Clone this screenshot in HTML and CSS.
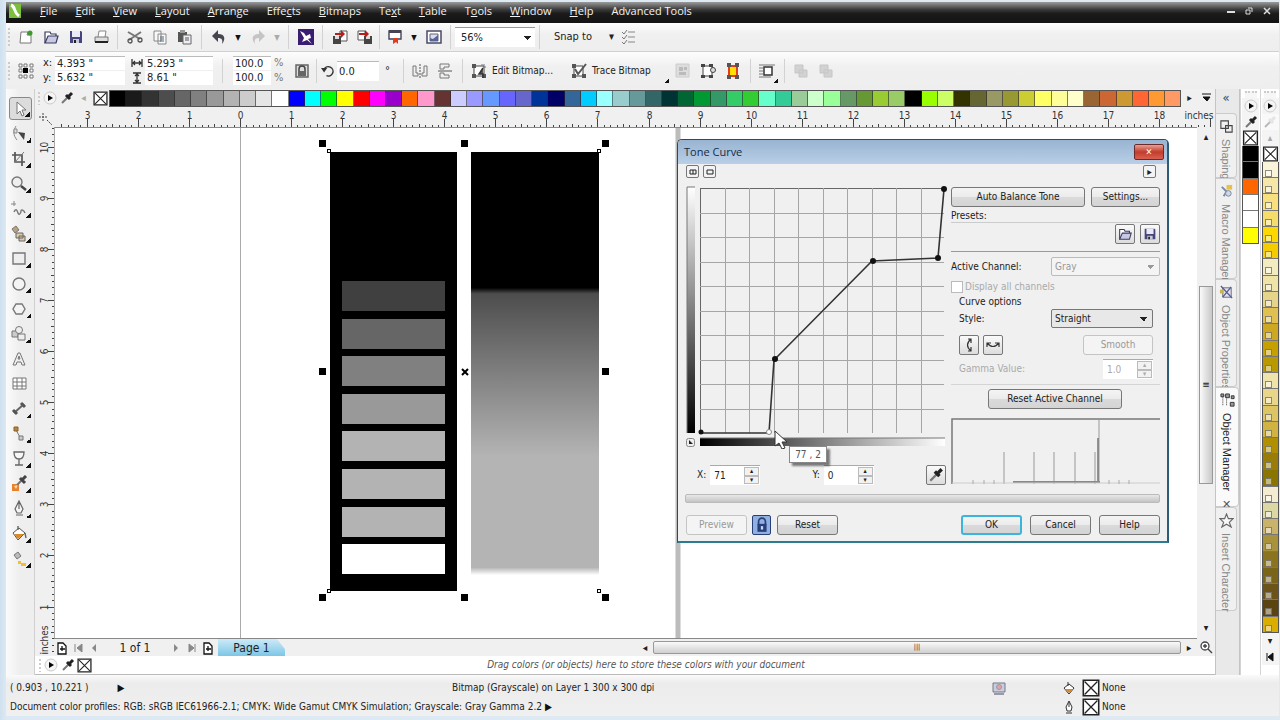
FILE: index.html
```html
<!DOCTYPE html>
<html lang="en">
<head>
<meta charset="utf-8">
<title>Tone Curve</title>
<link rel="stylesheet" href="styles.css">
</head>
<body>
<svg class="defs" aria-hidden="true">
  <defs>
    <linearGradient id="ramp-v" x1="0" y1="0" x2="0" y2="1"><stop offset="0" stop-color="#fff"/><stop offset="1" stop-color="#000"/></linearGradient>
    <linearGradient id="ramp-h" x1="0" y1="0" x2="1" y2="0"><stop offset="0" stop-color="#000"/><stop offset="1" stop-color="#fff"/></linearGradient>
    <linearGradient id="blend" x1="0" y1="0" x2="0" y2="1"><stop offset="0" stop-color="#000"/><stop offset=".321" stop-color="#000"/><stop offset=".335" stop-color="#4d4d4d"/><stop offset=".72" stop-color="#b4b4b4"/><stop offset=".982" stop-color="#b4b4b4"/><stop offset="1" stop-color="#fff"/></linearGradient>
  </defs>
  <symbol id="i-new" viewBox="0 0 18 18"><path d="M4 4h7l-1 3h4v8H3z" fill="#fff" stroke="#777"/><circle cx="13" cy="5" r="2.500" fill="#3d9a2e"/></symbol>
  <symbol id="i-open" viewBox="0 0 18 18"><path d="M3 15V4h5l1 2h5v2" fill="#fff" stroke="#3b3a60" stroke-width="1.2"/><path d="M3 15l3-7h10l-2 7z" fill="#c9c9e2" stroke="#3b3a60" stroke-width="1.2"/></symbol>
  <symbol id="i-save" viewBox="0 0 18 18"><path d="M3 3h11l1 1v11H3z" fill="#45447c"/><path d="M5 3h8v6H5z" fill="#e8e8f6"/><path d="M6 11h6v4H6z" fill="#c9c9d8"/><path d="M7 12h2v3H7z" fill="#222"/></symbol>
  <symbol id="i-print" viewBox="0 0 18 18"><path d="M6 9l1-6h7l-1 6" fill="#fff" stroke="#888"/><path d="M3 9h13v5H3z" fill="#ddd" stroke="#777"/><path d="M3 14h13" stroke="#222" stroke-width="2"/></symbol>
  <symbol id="i-cut" viewBox="0 0 18 18"><path d="M2 4l12 7M3 12l12-8" stroke="#777" stroke-width="2"/><circle cx="4" cy="13" r="2" fill="none" stroke="#555" stroke-width="1.3"/><circle cx="14" cy="12" r="2" fill="none" stroke="#555" stroke-width="1.3"/></symbol>
  <symbol id="i-copy" viewBox="0 0 18 18"><path d="M3 3h7v10H3zM7 6h8v10H7z" fill="#f8f8f8" stroke="#888"/><path d="M9 9h4M9 11h4M9 13h4" stroke="#567"/></symbol>
  <symbol id="i-paste" viewBox="0 0 18 18"><path d="M2 4h9v10H2z" fill="#555"/><path d="M4 2h5v3H4z" fill="#999"/><path d="M7 7h8v9H7z" fill="#eee" stroke="#666"/><path d="M9 10h4M9 12h4" stroke="#556"/></symbol>
  <symbol id="i-undo" viewBox="0 0 18 18"><path d="M2 8l6-6v4c7 0 8 5 4 10 1-4 0-6-4-6v4z" fill="currentColor"/></symbol>
  <symbol id="i-corel" viewBox="0 0 18 18"><path d="M1 1h16v16H1z" fill="#3a1c70"/><path d="M3 3l4 2 2 3 4-2 1 4-3 1 4 5-5-4-5 2 2-4z" fill="#fff"/></symbol>
  <symbol id="i-import" viewBox="0 0 18 18"><path d="M9 3h7v10H9z" fill="#fff" stroke="#555"/><path d="M2 8h8v8H2z" fill="#444"/><path d="M4 8h4v3H4z" fill="#ddd"/><path d="M4 5h6V2l4 4-4 4V7H4z" fill="#b81c1c"/></symbol>
  <symbol id="i-export" viewBox="0 0 18 18"><path d="M2 3h7v9H2z" fill="#fff" stroke="#555"/><path d="M8 8h8v8H8z" fill="#444"/><path d="M10 8h4v3h-4z" fill="#ddd"/><path d="M3 5h6V2l4 4-4 4V7H3z" fill="#b81c1c"/></symbol>
  <symbol id="i-publish" viewBox="0 0 18 18"><path d="M3 3h12v8H3z" fill="#fff" stroke="#445" stroke-width="1.4"/><path d="M3 2h12v3H3z" fill="#445"/><path d="M7 10h5v6l-2-2-3 2z" fill="#e23b1f"/></symbol>
  <symbol id="i-welcome" viewBox="0 0 18 18"><path d="M2 3h14v12H2z" fill="#fff" stroke="#4a4a68" stroke-width="1.5"/><path d="M5 6h8v7H5z" fill="#dde" stroke="#667"/><path d="M5 13v-3l3 1 5-4v6z" fill="#55649a"/></symbol>
  <symbol id="i-list" viewBox="0 0 18 18"><path d="M8 4h7M8 9h7M8 14h7" stroke="#888" stroke-width="1.2"/><path d="M2 4l2 2 3-4M2 9l2 2 3-4M2 14l2 2 3-4" fill="none" stroke="#777"/></symbol>
  <symbol id="i-origin" viewBox="0 0 18 18"><path d="M2 2h3v3H2zM7 2h3v3H7zM13 2h3v3h-3zM2 7h3v3H2zM13 7h3v3h-3zM2 13h3v3H2zM7 13h3v3H7zM13 13h3v3h-3z" fill="#fff" stroke="#777"/><path d="M6 6h5v5H6z" fill="#000"/></symbol>
  <symbol id="i-width" viewBox="0 0 12 12"><path d="M1 2v8M11 2v8M2 6h8M4 4L2 6l2 2M8 4l2 2-2 2" fill="none" stroke="#333" stroke-width="1.3"/></symbol>
  <symbol id="i-height" viewBox="0 0 12 12"><path d="M2 1h8M2 11h8M6 2v8M4 4l2-2 2 2M4 8l2 2 2-2" fill="none" stroke="#333" stroke-width="1.3"/></symbol>
  <symbol id="i-lock" viewBox="0 0 18 18"><path d="M3 3h12v12H3z" fill="#ddd" stroke="#666" stroke-width="1.5"/><path d="M6 9V7a3 3 0 0 1 6 0v2" fill="none" stroke="#444" stroke-width="1.5"/><path d="M5 9h8v5H5z" fill="#666"/></symbol>
  <symbol id="i-rotate" viewBox="0 0 18 18"><path d="M4 7a6 6 0 1 1 3 8" fill="none" stroke="#333" stroke-width="1.8"/><path d="M0 5h8l-4 6z" fill="#333"/></symbol>
  <symbol id="i-mirror-h" viewBox="0 0 18 18"><path d="M2 4v10h5v-3H5V4z M16 4v10h-5v-3h2V4z" fill="none" stroke="#777"/><path d="M9 2v14" stroke="#555" stroke-dasharray="2 1"/></symbol>
  <symbol id="i-mirror-v" viewBox="0 0 18 18"><path d="M4 2h9v3H8v2H4zM4 16h9v-3H8v-2H4z" fill="none" stroke="#777"/><path d="M2 9h14" stroke="#555"/></symbol>
  <symbol id="i-bitmap" viewBox="0 0 18 18"><path d="M4 4h10v10H4z" fill="#fff" stroke="#444"/><path d="M2 2h4v4H2zM2 12h4v4H2zM12 12h4v4h-4z" fill="#555"/><path d="M11 3h4M13 5h3" stroke="#777"/><path d="M13 6l-4 6h4v4" stroke="#333" stroke-width="1.5" fill="#555"/></symbol>
  <symbol id="i-trace" viewBox="0 0 18 18"><path d="M4 4h9v10H4z" fill="#fff" stroke="#444"/><path d="M2 2h4v4H2zM2 12h4v4H2zM12 12h4v4h-4z" fill="#555"/><path d="M5 7l3 5 8-10" stroke="#555" stroke-width="2" fill="none"/></symbol>
  <symbol id="i-resample" viewBox="0 0 18 18"><path d="M2 2h13v13H2z" fill="#ddd" stroke="#ccc"/><path d="M5 5h4v4H5zM10 5h3v3h-3zM5 10h7v3H5z" fill="#bbb"/></symbol>
  <symbol id="i-crop-b" viewBox="0 0 18 18"><path d="M4 4h9v10H4z" fill="#fff" stroke="#444"/><path d="M2 2h4v3H2zM10 2h4v3h-4zM2 13h4v3H2zM10 13h4v3h-4z" fill="#444"/><circle cx="14" cy="8" r="2.500" fill="#ddd" stroke="#444"/></symbol>
  <symbol id="i-outline" viewBox="0 0 18 18"><path d="M4 3h10v12H4z" fill="#e63a20"/><path d="M6 5h6v8H6z" fill="#ffe000"/><path d="M3 1h4v4H3zM11 1h4v4h-4zM3 13h4v4H3zM11 13h4v4h-4z" fill="#555"/></symbol>
  <symbol id="i-wrap" viewBox="0 0 18 18"><path d="M1 3h16M1 6h4M1 9h4M1 12h4M1 15h12" stroke="#777"/><path d="M6 5h8v8H6z" fill="#fff" stroke="#333" stroke-width="1.5"/></symbol>
  <symbol id="i-order" viewBox="0 0 18 18"><path d="M3 3h8v8H3zM7 8h8v7H7z" fill="#d2d2d2" stroke="#c6c6c6"/></symbol>
  <symbol id="i-play" viewBox="0 0 14 14"><circle cx="7" cy="7" r="6" fill="#f4f4f4" stroke="#ccc"/><path d="M5 4l5 3-5 3z" fill="#000"/></symbol>
  <symbol id="i-dropper" viewBox="0 0 14 14"><path d="M2 12l6-6" stroke="#777" stroke-width="2"/><path d="M6 4l4 4M8 6l4-4" stroke="currentColor" stroke-width="3"/></symbol>
  <symbol id="i-x" viewBox="0 0 14 14"><path d="M1 1h12v12H1z" fill="#fff" stroke="#222" stroke-width="1.2"/><path d="M2 2l10 10M12 2L2 12" stroke="#222"/></symbol>
  <symbol id="t-pick" viewBox="0 0 18 18"><path d="M7 2v12l3-3 2 5 2-1-2-5h4z" fill="#fff" stroke="#777"/></symbol>
  <symbol id="t-shape" viewBox="0 0 18 18"><path d="M6 1c-3 5-3 9 1 14" fill="none" stroke="#888"/><path d="M4 4h3v4H4z" fill="#ddd" stroke="#888"/><path d="M8 7l7 1-1 7z" fill="#444"/></symbol>
  <symbol id="t-crop" viewBox="0 0 18 18"><path d="M5 2v10h10M2 5h10v11" fill="none" stroke="#555" stroke-width="1.7"/><path d="M5 12L14 2" stroke="#777"/></symbol>
  <symbol id="t-zoom" viewBox="0 0 18 18"><circle cx="7" cy="7" r="5" fill="#eee" stroke="#777" stroke-width="1.4"/><path d="M11 11l5 4" stroke="#444" stroke-width="2.500"/></symbol>
  <symbol id="t-free" viewBox="0 0 18 18"><path d="M4 1v5M1 4h5" stroke="#888"/><path d="M4 12c2-4 3-2 4 1s3 0 3-2 3-1 4 2" fill="none" stroke="#777" stroke-width="1.4"/></symbol>
  <symbol id="t-smart" viewBox="0 0 18 18"><path d="M2 4l4-3 3 4-4 3z" fill="#b8a080" stroke="#777"/><path d="M6 8h7v5H6zM9 11h6v5H9z" fill="#ddc9a4" stroke="#666"/></symbol>
  <symbol id="t-rect" viewBox="0 0 18 18"><path d="M3 3h12v11H3z" fill="#eee" stroke="#777" stroke-width="1.4"/></symbol>
  <symbol id="t-ellipse" viewBox="0 0 18 18"><circle cx="9" cy="9" r="6" fill="#f4f4f4" stroke="#777" stroke-width="1.4"/></symbol>
  <symbol id="t-poly" viewBox="0 0 18 18"><path d="M6 4h6l3 5-3 5H6L3 9z" fill="#f4f4f4" stroke="#777" stroke-width="1.4"/></symbol>
  <symbol id="t-basic" viewBox="0 0 18 18"><path d="M2 6h6v6H2z" fill="#ccc" stroke="#777"/><circle cx="9" cy="5" r="3.500" fill="#eee" stroke="#777"/><path d="M8 9h7v6H8z" fill="#eee" stroke="#777"/></symbol>
  <symbol id="t-text" viewBox="0 0 18 18"><path d="M3 15L8 3h2l5 12h-3l-1-3H7l-1 3zM8 9h2L9 6z" fill="#eee" stroke="#777"/></symbol>
  <symbol id="t-table" viewBox="0 0 18 18"><path d="M3 3h13v11H3zM3 7h13M3 11h13M7 3v11M12 3v11" fill="#fff" stroke="#777"/></symbol>
  <symbol id="t-dim" viewBox="0 0 18 18"><path d="M4 13L14 4" stroke="#666" stroke-width="2"/><path d="M3 10l4 4M11 3l4 4" stroke="#555" stroke-width="3"/></symbol>
  <symbol id="t-conn" viewBox="0 0 18 18"><path d="M6 5l5 9" stroke="#777"/><path d="M4 2h4v4H4z" fill="#b9843c" stroke="#86602c"/><path d="M9 11h4v4H9z" fill="#ccc" stroke="#777"/></symbol>
  <symbol id="t-glass" viewBox="0 0 18 18"><path d="M4 2h10c0 4-1 7-5 7S4 6 4 2zM9 9v6M5 15h8" fill="#f6f6f6" stroke="#666" stroke-width="1.3"/></symbol>
  <symbol id="t-eyed" viewBox="0 0 18 18"><path d="M2 9h7v7H2z" fill="#e8822e"/><path d="M4 11l4-1-2 4z" fill="#ffd9a0"/><path d="M7 10l6-6" stroke="#777" stroke-width="2"/><path d="M10 3l5 5M12 5l4-4" stroke="#444" stroke-width="3"/></symbol>
  <symbol id="t-pen" viewBox="0 0 18 18"><path d="M9 1l4 8-2 4H7L5 9zM6 15h7M9 2v7" fill="#f4f4f4" stroke="#666" stroke-width="1.2"/></symbol>
  <symbol id="t-fill" viewBox="0 0 18 18"><path d="M3 8l6-5 6 5-7 7z" fill="#fff" stroke="#555"/><path d="M4 9h10l-6 5z" fill="#d88a2a"/><path d="M8 5V1M15 8l1 5" stroke="#666" stroke-width="1.4"/></symbol>
  <symbol id="t-ifill" viewBox="0 0 18 18"><path d="M4 5l4-3 3 4-4 3z" fill="#bbb" stroke="#777"/><path d="M8 11h3v3H8zM11 13h5v3h-5z" fill="#f0c030"/></symbol>
  <symbol id="i-addpage" viewBox="0 0 14 14"><path d="M3 2h5l3 3v8H3zM7 5v5M5 8h5" fill="#fff" stroke="#111" stroke-width="1.3"/></symbol>
  <symbol id="i-shaping" viewBox="0 0 16 16"><path d="M2 2h8v8H2zM7 7h7v7H7z" fill="none" stroke="#444" stroke-width="1.2"/></symbol>
  <symbol id="i-macro" viewBox="0 0 16 16"><path d="M8 1h6v5H8z" fill="#e6c24c"/><path d="M3 3l5 5-3 5" fill="none" stroke="#7d8aa5" stroke-width="2"/><circle cx="10" cy="10" r="3" fill="#cfd9ea" stroke="#789"/></symbol>
  <symbol id="i-props" viewBox="0 0 16 16"><path d="M4 3h9v10H4z" fill="#dfe3f4" stroke="#667"/><path d="M2 1l12 13M13 2L4 13" stroke="#5a5a88" stroke-width="1.4"/><path d="M1 5h4v4H1z" fill="#c8b552"/></symbol>
  <symbol id="i-tree" viewBox="0 0 16 16"><path d="M3 4v10M7 4v10M3 3h8" stroke="#333" stroke-dasharray="1 1"/><path d="M1 1h3v3H1zM6 1h4v4H6zM12 3h3v3h-3zM11 10h4v4h-4z" fill="#999" stroke="#333"/></symbol>
  <symbol id="i-star" viewBox="0 0 16 16"><path d="M8 1l2 5 5 0-4 4 2 5-5-3-5 3 2-5-4-4 5 0z" fill="#f8f8f8" stroke="#666" stroke-width="1.2"/></symbol>
  <symbol id="i-zoomdoc" viewBox="0 0 14 14"><circle cx="6" cy="6" r="4" fill="#fff" stroke="#444" stroke-width="1.3"/><path d="M4 6h4M6 4v4M9 9l4 4" stroke="#444" stroke-width="1.4"/></symbol>
  <symbol id="i-bucket" viewBox="0 0 14 14"><path d="M2 7l5-4 5 4-5 6z" fill="#fff" stroke="#333"/><path d="M3 8h8l-4 4z" fill="#d88a2a"/><path d="M6 5V1" stroke="#333"/></symbol>
  <symbol id="i-nib" viewBox="0 0 14 14"><path d="M7 1l3 6-1 4H5L4 7zM4 13h6M7 2v5" fill="#fff" stroke="#333"/></symbol>
</svg>

<div class="app">
  <header class="menubar">
    <svg class="logo" viewBox="0 0 14 16" aria-hidden="true"><path d="M1 1h12v14H1z" fill="#7cbf3c"/><path d="M3 2c5 2 2 7 8 11" stroke="#fff" stroke-width="3" fill="none"/></svg>
    <nav class="menus">
      <button><u>F</u>ile</button><button><u>E</u>dit</button><button><u>V</u>iew</button><button><u>L</u>ayout</button><button><u>A</u>rrange</button><button>Effe<u>c</u>ts</button><button><u>B</u>itmaps</button><button>Te<u>x</u>t</button><button><u>T</u>able</button><button>T<u>o</u>ols</button><button><u>W</u>indow</button><button><u>H</u>elp</button><button>Advanced Tools</button>
    </nav>
    <div class="winbtns">
      <button aria-label="Minimize"><svg viewBox="0 0 8 8"><path d="M0 5h8" stroke="#ddd" stroke-width="2"/></svg></button>
      <button aria-label="Restore"><svg viewBox="0 0 8 8"><path d="M1 3h4v4H1zM3 1h4v4" fill="none" stroke="#ddd"/></svg></button>
      <button aria-label="Close"><svg viewBox="0 0 8 8"><path d="M1 1l6 6M7 1L1 7" stroke="#ddd" stroke-width="1.500"/></svg></button>
    </div>
  </header>

  <div class="toolbar standard">
    <i class="grip"></i>
    <button class="tb" aria-label="New"><svg><use href="#i-new"/></svg></button>
    <button class="tb" aria-label="Open"><svg><use href="#i-open"/></svg></button>
    <button class="tb" aria-label="Save"><svg><use href="#i-save"/></svg></button>
    <button class="tb" aria-label="Print"><svg><use href="#i-print"/></svg></button>
    <i class="sep"></i>
    <button class="tb" aria-label="Cut"><svg><use href="#i-cut"/></svg></button>
    <button class="tb" aria-label="Copy"><svg><use href="#i-copy"/></svg></button>
    <button class="tb" aria-label="Paste"><svg><use href="#i-paste"/></svg></button>
    <i class="sep"></i>
    <button class="tb undo" aria-label="Undo"><svg><use href="#i-undo"/></svg></button>
    <button class="dd" aria-label="Undo list">▾</button>
    <button class="tb redo" aria-label="Redo"><svg><use href="#i-undo"/></svg></button>
    <button class="dd off" aria-label="Redo list">▾</button>
    <i class="sep"></i>
    <button class="tb" aria-label="Search content"><svg><use href="#i-corel"/></svg></button>
    <i class="sep"></i>
    <button class="tb" aria-label="Import"><svg><use href="#i-import"/></svg></button>
    <button class="tb" aria-label="Export"><svg><use href="#i-export"/></svg></button>
    <i class="sep tight"></i>
    <button class="tb" aria-label="Application launcher"><svg><use href="#i-publish"/></svg></button>
    <button class="dd" aria-label="Launcher list">▾</button>
    <button class="tb" aria-label="Welcome screen"><svg><use href="#i-welcome"/></svg></button>
    <i class="sep"></i>
    <select class="zoom" aria-label="Zoom level"><option>56%</option></select>
    <i class="sep"></i>
    <button class="snap">Snap to <span>▾</span></button>
    <button class="tb" aria-label="Options"><svg><use href="#i-list"/></svg></button>
  </div>

  <div class="toolbar property">
    <i class="grip"></i>
    <button class="tb" aria-label="Object origin"><svg><use href="#i-origin"/></svg></button>
    <div class="pairs pos">
      <label for="px">x:</label><input id="px" value='4.393 "'>
      <label for="py">y:</label><input id="py" value='5.632 "'>
    </div>
    <div class="pairs size">
      <label for="pw" aria-label="Width"><svg><use href="#i-width"/></svg></label><input id="pw" value='5.293 "'>
      <label for="ph" aria-label="Height"><svg><use href="#i-height"/></svg></label><input id="ph" value='8.61 "'>
    </div>
    <i class="sep"></i>
    <div class="pairs scale">
      <input id="sx" value="100.0" aria-label="Scale x"><label for="sx">%</label>
      <input id="sy" value="100.0" aria-label="Scale y"><label for="sy">%</label>
    </div>
    <button class="tb" aria-label="Lock ratio"><svg><use href="#i-lock"/></svg></button>
    <i class="sep tight"></i>
    <label class="angle"><svg><use href="#i-rotate"/></svg><input value="0.0" aria-label="Angle"><span>°</span></label>
    <i class="sep"></i>
    <button class="tb" aria-label="Mirror horizontally"><svg><use href="#i-mirror-h"/></svg></button>
    <button class="tb" aria-label="Mirror vertically"><svg><use href="#i-mirror-v"/></svg></button>
    <i class="sep"></i>
    <button class="wide"><svg><use href="#i-bitmap"/></svg>Edit Bitmap...</button>
    <button class="wide trace"><svg><use href="#i-trace"/></svg>Trace Bitmap</button>
    <button class="tb" aria-label="Resample"><svg><use href="#i-resample"/></svg></button>
    <button class="tb" aria-label="Crop bitmap"><svg><use href="#i-crop-b"/></svg></button>
    <button class="tb" aria-label="Outline"><svg><use href="#i-outline"/></svg></button>
    <i class="sep"></i>
    <button class="tb fly" aria-label="Wrap text"><svg><use href="#i-wrap"/></svg></button>
    <i class="sep"></i>
    <button class="tb" aria-label="To front"><svg><use href="#i-order"/></svg></button>
    <button class="tb" aria-label="To back"><svg><use href="#i-order"/></svg></button>
  </div>

  <div class="work">
    <aside class="toolbox" id="toolbox"></aside>

    <section class="center">
      <div class="palette-row">
        <i class="grip"></i>
        <button class="pb" aria-label="Palette menu"><svg><use href="#i-play"/></svg></button>
        <button class="pb" aria-label="Eyedropper"><svg><use href="#i-dropper"/></svg></button>
        <button class="pb dim" aria-label="Scroll left">◂</button>
        <button class="pb none" aria-label="No color"><svg><use href="#i-x"/></svg></button>
        <div class="swatches" id="main-palette"></div>
        <button class="pb" aria-label="Scroll right">▸</button>
        <button class="pb" aria-label="Expand palette"><svg viewBox="0 0 14 14"><path d="M2 3h9M3 6h7l-3 4z" fill="#111" stroke="#111"/></svg></button>
      </div>
      <div class="sheet">
        <svg class="ruler-h" id="ruler-h" aria-label="Horizontal ruler"></svg>
        <svg class="ruler-v" id="ruler-v" aria-label="Vertical ruler"></svg>
        <main class="canvas">
          <svg class="art" viewBox="54 127 644 511" width="644" height="511" aria-label="Drawing">
            <path d="M240.500 127v511" stroke="#aaa"/>
            <path d="M678 127v511" stroke="#bcbcbc" stroke-width="5"/>
            <path d="M330 152h127v439H330z"/>
            <g id="bars"></g>
            <path d="M471 152h128v423H471z" fill="url(#blend)"/>
            <g id="handles"></g>
            <path d="M462 369l6 6M468 369l-6 6" stroke="#000" stroke-width="2"/>
          </svg>

          <form class="dialog" onsubmit="return false">
            <div class="titlebar"><h1>Tone Curve</h1><button class="close" type="button" aria-label="Close">✕</button></div>
            <div class="d-body">
              <div class="d-top">
                <button class="mini" type="button" aria-label="Before and after"><svg viewBox="0 0 8 6"><path d="M1 1h6v4H1zM4 1v4" fill="none" stroke="#222"/></svg></button>
                <button class="mini" type="button" aria-label="Single view"><svg viewBox="0 0 8 6"><path d="M1 1h6v4H1z" fill="none" stroke="#222"/></svg></button>
                <button class="mini last" type="button" aria-label="More">▸</button>
              </div>
              <div class="d-cols">
                <div class="left">
                  <div class="plot">
                    <svg viewBox="685 185 264 264" aria-label="Tone curve">
                      <path d="M687 187h8v246h-8z" fill="url(#ramp-v)"/><path d="M687 433V187h8" fill="none" stroke="#777"/>
                      <path d="M700 438h245v8H700z" fill="url(#ramp-h)"/><path d="M700 438h245" stroke="#777"/>
                      <rect x="686.500" y="438.500" width="8" height="8" rx="2" fill="#eee" stroke="#888"/><path d="M689 440v4h4z" fill="#222"/>
                      <g id="grid"></g>
                      <path d="M701 433h68l5-73 98-99 66-3 6-69" fill="none" stroke="#333" stroke-width="1.600"/>
                      <g fill="#111"><circle cx="701" cy="432" r="2.500"/><circle cx="775" cy="359" r="3"/><circle cx="873" cy="261" r="3"/><circle cx="938" cy="258" r="3"/><circle cx="944" cy="189" r="3"/></g>
                      <circle cx="769" cy="432" r="2.500" fill="#fff" stroke="#888"/>
                      <path d="M775 431v15l4-3 3 6 3-1-3-6h5z" fill="#fff" stroke="#333"/>
                    </svg>
                    <output class="tip">77 , 2</output>
                  </div>
                  <div class="xy">
                    <label for="cx">X:</label><span class="spin"><input id="cx" value="71"><span class="arrows"><button type="button" aria-label="X up">▴</button><button type="button" aria-label="X down">▾</button></span></span>
                    <label for="cy">Y:</label><span class="spin"><input id="cy" value="0"><span class="arrows"><button type="button" aria-label="Y up">▴</button><button type="button" aria-label="Y down">▾</button></span></span>
                    <button class="sq" type="button" aria-label="Pick tone"><svg><use href="#i-dropper"/></svg></button>
                  </div>
                </div>
                <div class="right">
                  <div class="row two"><button class="btn grow" type="button">Auto Balance Tone</button><button class="btn set" type="button">Settings...</button></div>
                  <div class="presets"><span>Presets:</span><div class="row well"><button class="sq" type="button" aria-label="Open preset"><svg><use href="#i-open"/></svg></button><button class="sq" type="button" aria-label="Save preset"><svg><use href="#i-save"/></svg></button></div></div>
                  <div class="row"><label for="chan">Active Channel:</label><select id="chan" disabled><option>Gray</option></select></div>
                  <label class="check off"><input type="checkbox" disabled>Display all channels</label>
                  <fieldset>
                    <legend>Curve options</legend>
                    <div class="row"><label for="style">Style:</label><select id="style"><option>Straight</option></select></div>
                    <div class="row tools"><button class="sq" type="button" aria-label="Flip vertically"><svg viewBox="0 0 16 16"><path d="M10 2Q3 8 10 14M7 2h3v4M7 14h3v-4" fill="none" stroke="#333" stroke-width="1.200"/></svg></button><button class="sq" type="button" aria-label="Flip horizontally"><svg viewBox="0 0 16 16"><path d="M2 6Q8 13 14 6M2 10V6h4M14 10V6h-4" fill="none" stroke="#333" stroke-width="1.200"/></svg></button><button class="btn smooth" type="button" disabled>Smooth</button></div>
                    <div class="row off"><label for="gamma">Gamma Value:</label><span class="spin"><input id="gamma" value="1.0" disabled><span class="arrows"><button type="button" disabled aria-label="Gamma up">▴</button><button type="button" disabled aria-label="Gamma down">▾</button></span></span></div>
                  </fieldset>
                  <button class="btn resetch" type="button">Reset Active Channel</button>
                  <svg class="hist" viewBox="0 0 209 66" aria-label="Histogram"><path d="M1 66V1h208" fill="none" stroke="#777" stroke-width="1.500"/><path d="M53 34v32M83 34v32M103 34v32M124 34v32M144 34v32" stroke="#999"/><path d="M148 1v64" stroke="#999"/><path d="M147 20v45" stroke="#777" stroke-width="1.500"/><path d="M62 64h87" stroke="#888" stroke-width="2"/><path d="M1 65h208" stroke="#ccc"/><path d="M22 62v4M33 62v4M43 62v4M158 62v4M168 62v4M178 62v4" stroke="#aaa"/></svg>
                </div>
              </div>
              <div class="progress"></div>
              <div class="d-buttons">
                <button class="btn preview" type="button" disabled>Preview</button>
                <button class="sq lockon" type="button" aria-label="Lock preview"><svg viewBox="0 0 14 14"><path d="M4 7V4a3 3 0 0 1 6 0v3" fill="none" stroke="#28407a" stroke-width="1.500"/><path d="M3 6h8v7H3z" fill="#28407a"/><path d="M6 8h2v3H6z" fill="#c8d8f4"/></svg></button>
                <button class="btn reset" type="button">Reset</button>
                <button class="btn ok" type="submit">OK</button>
                <button class="btn" type="button">Cancel</button>
                <button class="btn" type="button">Help</button>
              </div>
            </div>
          </form>
        </main>
        <div class="scroll-v"><button aria-label="Scroll up">▴</button><div class="thumb-v">≡</div><button aria-label="Scroll down">▾</button></div>
        <div class="pagebar">
          <button aria-label="Add page"><svg><use href="#i-addpage"/></svg></button>
          <button aria-label="First page"><svg viewBox="0 0 14 14"><path d="M4 3v8M11 3L6 7l5 4z" fill="#888" stroke="#888"/></svg></button>
          <button aria-label="Previous page"><svg viewBox="0 0 14 14"><path d="M9 3L5 7l4 4z" fill="#888"/></svg></button>
          <span class="count">1 of 1</span>
          <button aria-label="Next page"><svg viewBox="0 0 14 14"><path d="M5 3l4 4-4 4z" fill="#888"/></svg></button>
          <button aria-label="Last page"><svg viewBox="0 0 14 14"><path d="M10 3v8M4 3l5 4-5 4z" fill="#888" stroke="#888"/></svg></button>
          <button aria-label="Add page after"><svg><use href="#i-addpage"/></svg></button>
          <button class="tab">Page 1</button>
          <span class="hbar"><button aria-label="Scroll left">◂</button><span class="thumb-h">|||</span><button aria-label="Scroll right">▸</button></span>
        </div>
        <button class="navi" aria-label="Navigator"><svg><use href="#i-zoomdoc"/></svg></button>
      </div>
      <div class="docpalette">
        <i class="grip"></i>
        <button class="pb" aria-label="Document palette menu"><svg><use href="#i-play"/></svg></button>
        <button class="pb" aria-label="Eyedropper"><svg><use href="#i-dropper"/></svg></button>
        <button class="pb none" aria-label="No color"><svg><use href="#i-x"/></svg></button>
        <p>Drag colors (or objects) here to store these colors with your document</p>
      </div>
    </section>

    <aside class="dockers">
      <button class="chev" aria-label="Collapse dockers">«</button>
      <button class="dk shaping"><svg><use href="#i-shaping"/></svg><span>Shaping</span></button>
      <button class="dk macro"><svg><use href="#i-macro"/></svg><span>Macro Manager</span></button>
      <button class="dk props"><svg><use href="#i-props"/></svg><span>Object Properties</span></button>
      <button class="dk active"><svg><use href="#i-tree"/></svg><span>Object Manager</span><b>✕</b></button>
      <button class="dk insert"><svg><use href="#i-star"/></svg><span>Insert Character</span></button>
    </aside>
    <aside class="vpal">
      <i class="grip-h"></i>
      <button class="pv" aria-label="Palette menu"><svg><use href="#i-play"/></svg></button>
      <button class="pv" aria-label="Eyedropper"><svg><use href="#i-dropper"/></svg></button>
      <button class="pv box" aria-label="No color"><svg><use href="#i-x"/></svg></button>
      <div class="vsw short" id="doc-colors"></div>
    </aside>
    <aside class="vpal">
      <i class="grip-h"></i>
      <button class="pv" aria-label="Palette menu"><svg><use href="#i-play"/></svg></button>
      <button class="pv pale" aria-label="Eyedropper"><svg><use href="#i-dropper"/></svg></button>
      <button class="pv dim" aria-label="Scroll up">▴</button>
      <button class="pv box" aria-label="No color"><svg><use href="#i-x"/></svg></button>
      <div class="vsw" id="spot-colors"></div>
      <button class="pv" aria-label="Scroll down">▾</button>
      <button class="pv" aria-label="Expand palette"><svg viewBox="0 0 14 14"><path d="M4 3v8M10 3L5 7l5 4z" fill="#111" stroke="#111"/></svg></button>
    </aside>
  </div>

  <footer class="status">
    <div class="coords"><span>( 0.903 , 10.221 )</span><span class="tri">▶</span></div>
    <div>Bitmap (Grayscale) on Layer 1 300 x 300 dpi</div>
    <svg class="monitor" viewBox="0 0 14 14" aria-hidden="true"><path d="M1 2h12v9H1z" fill="#c9cde0" stroke="#778"/><circle cx="7" cy="6" r="2.500" fill="#e8a0a0" stroke="#99a"/><path d="M2 13h10" stroke="#99a" stroke-width="2"/></svg>
    <div class="paint"><svg><use href="#i-bucket"/></svg><svg><use href="#i-x"/></svg><span>None</span></div>
    <div class="profiles">Document color profiles: RGB: sRGB IEC61966-2.1; CMYK: Wide Gamut CMYK Simulation; Grayscale: Gray Gamma 2.2 <span class="tri">▶</span></div>
    <div class="paint"><svg><use href="#i-nib"/></svg><svg><use href="#i-x"/></svg><span>None</span></div>
  </footer>
</div>
<script src="app.js"></script>
</body>
</html>
```
FILE: styles.css
```css
* { box-sizing: border-box; }
body {
  margin: 0; height: 100vh; overflow: hidden; padding: 2px 1px 4px 6px;
  background: linear-gradient(90deg, #cfe0ee, #dce9f4 6px, #dfe9f2);
  font: 10px/12px "DejaVu Sans Condensed", "DejaVu Sans", sans-serif; color: #222;
}
button, input, select { font: inherit; color: inherit; margin: 0; padding: 0; border: 0; background: none; min-width: 0; }
button { display: flex; align-items: center; justify-content: center; }
select { appearance: none; }
i { font-style: normal; }
.defs { position: absolute; width: 0; height: 0; }
.app { height: 100%; display: flex; flex-direction: column; background: #f0f0f0; }

.menubar { height: 21px; display: flex; align-items: center; background: linear-gradient(#9a9a9a, #3c3c3c 35%, #1b1b1b 55%, #131313); color: #f2f2f2; padding: 0 8px 3px 2px; flex: none; }
.logo { width: 14px; height: 16px; margin-right: 9px; }
.menus { display: flex; font: 11px/16px "Open Sans", sans-serif; flex: 1; }
.menus button { padding: 0 9px; white-space: nowrap; display: block; }
.winbtns { display: flex; gap: 10px; }
.winbtns svg { width: 8px; height: 8px; display: block; }

.toolbar { display: flex; align-items: center; flex: none; background: linear-gradient(#fdfdfd, #f0f0f0 40%, #eee); }
.standard { height: 29px; border-bottom: 1px solid #d0d0d0; }
.property { height: 37px; }
.grip { width: 4px; height: 20px; margin: 0 2px 0 1px; background: radial-gradient(circle, #ccc 1px, transparent 1px) 0 0 / 4px 4px; flex: none; }
.tb { width: 25px; height: 24px; flex: none; }
.tb svg, .wide svg { width: 18px; height: 18px; }
.sep { width: 1px; height: 24px; background: #d2d2d2; margin: 0 4px; flex: none; }
.sep.tight { margin: 0 2px; }
.dd { width: 14px; font-size: 12px; color: #111; }
.off, .off button, .dim { color: #aaa; }
.undo { color: #45454d; }
.redo { color: #c4c4c4; }
.redo svg { transform: scaleX(-1); }
.zoom, .right select { background: linear-gradient(45deg, transparent 50%, currentColor 50%) right 8px center / 4px 4px no-repeat, linear-gradient(-45deg, transparent 50%, currentColor 50%) right 4px center / 4px 4px no-repeat, #fff; }
.zoom { width: 80px; height: 20px; border-top: 1px solid #999; padding: 0 6px; font-size: 11px; }
.snap { width: 60px; justify-content: space-between; font-size: 11px; margin: 0 2px 0 10px; }

.pairs { display: grid; align-items: center; row-gap: 1px; font-size: 11px; line-height: 14px; }
.pairs input { height: 14px; background: #fff; width: 100%; padding: 0 2px; }
.pairs input:first-of-type { border-top: 1px solid #bbb; }
.pairs svg { width: 12px; height: 12px; display: block; margin: auto; }
.pos { grid-template-columns: 12px 70px; margin-left: 5px; }
.size { grid-template-columns: 16px 68px; margin: 0 5px 0 4px; }
.scale { grid-template-columns: 38px 14px; margin: 0 1px 0 6px; column-gap: 3px; }
.scale label { color: #777; }
.angle { display: flex; align-items: center; gap: 2px; margin: 0 9px 0 2px; font-size: 11px; }
.angle svg { width: 14px; height: 14px; }
.angle input { width: 42px; height: 20px; background: #fff; border-top: 1px solid #bbb; padding: 0 2px; }
.angle span { margin-left: 4px; }
.wide { gap: 4px; height: 24px; padding: 0 14px 0 3px; white-space: nowrap; }
.trace { padding-right: 20px; }
.trace, .fly { background: linear-gradient(135deg, transparent 50%, #111 50%) right 2px bottom / 4px 4px no-repeat; }

.work { flex: 1; min-height: 0; display: grid; grid-template-columns: 29px 1fr 25px 20px 19px; }
.toolbox { display: flex; flex-direction: column; align-items: center; padding-top: 8px; background: linear-gradient(90deg, #fbfbfb, #eee 50%); border-right: 1px solid #d0d0d0; }
.toolbox button { width: 23px; height: 23px; margin-bottom: 2px; flex: none; background: linear-gradient(135deg, transparent 50%, #111 50%) right 1px bottom 2px / 5px 5px no-repeat; }
.toolbox button.plain { background: none; }
.toolbox button.on { border: 1px solid #888; border-radius: 3px; background-color: #dcdcdc; }
.toolbox svg { width: 18px; height: 18px; margin-right: 3px; }

.center { display: flex; flex-direction: column; min-width: 0; }
.palette-row { display: flex; align-items: center; height: 18px; padding-left: 1px; }
.pb { width: 17px; height: 17px; font-size: 10px; flex: none; }
.pb svg { width: 14px; height: 14px; }
.pb.none svg { width: 15px; height: 15px; }
.palette-row .grip, .docpalette .grip { height: 14px; width: 3px; margin-right: 1px; }
.swatches { flex: 1; display: flex; border: 1px solid #555; height: 17px; min-width: 0; }
.swatches i { flex: 1; border-right: 1px solid rgba(40, 40, 40, .6); }
.swatches i:last-child { border-right: 0; }
.sheet { flex: 1; min-height: 0; display: grid; grid-template-columns: 19px 1fr 18px; grid-template-rows: 20px 1fr 18px; background: #f0f0f0; }
.ruler-h { grid-column: 1 / 4; width: 100%; height: 20px; display: block; }
.ruler-v { grid-row: 2 / 4; width: 19px; height: 100%; display: block; overflow: hidden; min-height: 0; }
.ruler-h text, .ruler-v text { font: 10px "DejaVu Sans Condensed", sans-serif; fill: #333; text-anchor: middle; }
.canvas { position: relative; background: #fff; border-top: 1px solid #888; border-left: 1px solid #aaa; overflow: hidden; min-height: 0; }
.art { position: absolute; left: -1px; top: -1px; }
.scroll-v { display: flex; flex-direction: column; justify-content: space-between; align-items: center; }
.scroll-v button { width: 100%; height: 20px; }
.thumb-v { width: 14px; height: 198px; margin-top: 120px; margin-bottom: 116px; border: 1px solid #999; background: linear-gradient(90deg, #fafafa, #c8c8c8); display: flex; align-items: center; justify-content: center; }
.pagebar { grid-column: 2; display: flex; align-items: center; border-top: 1px solid #888; }
.pagebar button { width: 16px; height: 16px; flex: none; }
.pagebar svg { width: 14px; height: 14px; }
.count { font-size: 12px; width: 66px; text-align: center; }
.pagebar .tab { width: 67px; height: 17px; margin-left: 2px; font-size: 12px; background: linear-gradient(#cdeaf8, #7cc6e6); clip-path: polygon(0 0, 88% 0, 100% 60%, 100% 100%, 0 100%); }
.hbar { flex: 1; display: flex; align-items: center; margin-left: 352px; }
.thumb-h { flex: 1; height: 13px; border: 1px solid #999; border-radius: 2px; background: linear-gradient(#fafafa, #cfcfcf); font-size: 7px; line-height: 11px; text-align: center; }
.navi svg { width: 14px; height: 14px; }
.docpalette { display: flex; align-items: center; height: 19px; padding-left: 2px; background: #fff; border-bottom: 1px solid #bbb; }
.docpalette p { flex: 1; margin: 0; padding-right: 16px; text-align: center; font-style: italic; color: #555; }

.dockers { background: #e9e9e9; border-left: 1px solid #c4c4c4; border-right: 1px solid #c4c4c4; display: flex; flex-direction: column; }
.chev { height: 18px; width: 20px; font-size: 13px; color: #444; margin-bottom: 6px; flex: none; }
.dk { writing-mode: vertical-rl; justify-content: flex-start; gap: 5px; width: 21px; padding: 5px 0; border: 1px solid #ccc; border-left: 0; border-radius: 0 4px 4px 0; color: #888; font: 11px/14px "Liberation Sans", Arial, sans-serif; flex: none; background: #f0f0f0; white-space: nowrap; }
.dk svg { width: 15px; height: 15px; flex: none; }
.dk b { margin-top: 2px; font-weight: normal; color: #555; }
.shaping { height: 65px; }
.macro { height: 101px; }
.props { height: 108px; }
.active { height: 120px; width: 23px; background: #fafafa; color: #222; }
.insert { height: 104px; }

.vpal { display: flex; flex-direction: column; align-items: center; background: #fff; border-left: 1px solid #d4d4d4; min-height: 0; }
.grip-h { width: 12px; height: 7px; flex: none; border-top: 2px dotted #ccc; background: #f6f6f6; margin-top: 2px; }
.pv { width: 17px; height: 16px; flex: none; background: #f4f4f4; }
.pv svg { width: 14px; height: 14px; }
.pv.box svg { width: 17px; height: 16px; }
.pale { color: #ccc; opacity: .5; }
.vsw { width: 17px; display: flex; flex-direction: column; flex: 1; border: 1px solid #555; border-top: 0; min-height: 0; max-height: 471px; }
.vsw i { flex: 1; border-bottom: 1px solid #777; padding: 8px 0 0 2px; min-height: 0; }
.vsw i:last-child { border-bottom: 0; }
.vsw.short { max-height: 98px; }
#spot-colors i::before { content: ""; display: block; width: 5px; height: 5px; border: 1px solid rgba(90, 90, 90, .7); background: rgba(255, 255, 255, .5); }

.status { flex: none; height: 41px; display: grid; grid-template-columns: 442px 1fr 70px 217px; grid-template-rows: 19px 19px; align-items: center; padding: 3px 0 0 4px; background: linear-gradient(#fafafa, #ececec 20%, #f0f0f0); }
.coords { display: flex; gap: 29px; }
.tri { color: #111; }
.monitor { width: 14px; height: 14px; }
.paint { display: flex; align-items: center; gap: 6px; }
.paint svg { width: 14px; height: 14px; }
.paint svg + svg { width: 18px; height: 18px; }
.paint span { margin-left: -4px; }
.profiles { grid-column: 1 / 4; }

.dialog { position: absolute; top: 11px; right: 28px; width: 492px; margin: 0; border: 1px solid #444; border-right: 2px solid #2c5c78; border-bottom: 2px solid #2c7c90; border-radius: 5px 5px 0 0; background: #f0f0f0; }
.titlebar { height: 24px; display: flex; align-items: center; justify-content: space-between; padding: 0 3px 0 6px; background: linear-gradient(#98b4d2, #b9cfe7); border-radius: 4px 4px 0 0; }
.dialog h1 { margin: 0; font: 11px/16px "Open Sans", sans-serif; color: #142c4c; }
.close { width: 30px; height: 16px; border: 1px solid #6c2a2a; border-radius: 2px; background: linear-gradient(#e8a090, #c23c2c 50%, #d86050); color: #fff; font-size: 9px; }
.d-body { padding: 1px 7px 6px; }
.d-top { display: flex; gap: 4px; padding: 0 4px 0 1px; height: 20px; align-items: flex-start; }
.mini { width: 13px; height: 13px; border: 1px solid #777; border-radius: 2px; background: #f4f4f4; }
.mini svg { width: 8px; height: 6px; }
.last { margin-left: auto; }
.d-cols { display: flex; justify-content: space-between; }
.left { width: 264px; }
.right { width: 209px; display: flex; flex-direction: column; padding-top: 2px; }
.plot { position: relative; }
.plot svg { width: 264px; height: 264px; display: block; }
.tip { position: absolute; left: 104px; top: 261px; width: 38px; height: 17px; background: #fff; border: 1px solid #888; box-shadow: 3px 3px 2px rgba(0, 0, 0, .5); color: #555; text-align: center; line-height: 15px; }
.xy { display: flex; align-items: center; height: 22px; padding: 0 3px 0 12px; margin-top: 15px; gap: 4px; }
.xy .spin { margin-right: auto; }
.spin { display: flex; width: 50px; height: 20px; background: #fff; border-top: 1px solid #aaa; }
.spin input { flex: 1; padding-left: 4px; width: 20px; }
.arrows { width: 15px; display: flex; flex-direction: column; margin: 1px; }
.arrows button { flex: 1; border: 1px solid #bbb; background: #f2f2f2; font-size: 7px; line-height: 6px; }
.sq { width: 20px; height: 20px; border: 1px solid #777; border-radius: 2px; background: linear-gradient(#fafafa, #dcdcdc); flex: none; }
.sq svg { width: 16px; height: 16px; }
.btn { height: 20px; border: 1px solid #777; border-radius: 3px; background: linear-gradient(#f4f4f4, #ebebeb 50%, #dadada 51%, #d4d4d4); white-space: nowrap; }
.btn:disabled { color: #999; border-color: #c4c4c4; background: #f4f4f4; }
.row { display: flex; align-items: center; justify-content: space-between; }
.two { gap: 6px; }
.grow { flex: 1; }
.set { width: 69px; }
.presets { margin-top: 3px; height: 42px; border-bottom: 1px solid #999; margin-bottom: 5px; }
.well { justify-content: flex-end; gap: 5px; border-top: 1px solid #ccc; padding-top: 1px; }
.right select { height: 19px; border: 1px solid #777; border-radius: 2px; padding: 0 3px; background-color: #e8e8e8; }
.right select:disabled { width: 109px; border-color: #bbb; color: #999; opacity: 1; background-color: #f4f4f4; }
.check { display: flex; align-items: center; gap: 2px; height: 14px; margin-top: 4px; }
.check input { appearance: none; width: 12px; height: 12px; background: #fff; border: 1px solid #bbb; }
fieldset { border: 0; border-bottom: 1px solid #d4d4d4; margin: 1px 0 4px; padding: 0 7px 5px 8px; min-width: 0; }
legend { padding: 0; height: 14px; line-height: 14px; }
#style { width: 102px; }
.tools { margin: 7px 0 4px; justify-content: flex-start; gap: 4px; }
.smooth { width: 70px; margin-left: auto; }
.resetch { width: 134px; margin-left: 37px; flex: none; }
.hist { height: 66px; margin-top: 9px; display: block; width: 209px; }
.progress { height: 9px; margin-top: 8px; border: 1px solid #bbb; border-radius: 2px; background: linear-gradient(#e8e8e8, #c4c4c4); }
.d-buttons { display: flex; gap: 8px; padding: 12px 0 0 1px; }
.d-buttons .btn { width: 61px; }
.d-buttons .preview { margin-right: -3px; }
.lockon { border-color: #28407a; background: #8fb0e0; margin-right: -2px; width: 19px; }
.d-buttons .ok { margin-left: auto; border: 2px solid #3cb4dc; }
```
FILE: app.js
```js
const NS = 'http://www.w3.org/2000/svg';
const $ = id => document.getElementById(id);
function draw(parent, tag, attrs, text) {
  const el = document.createElementNS(NS, tag);
  for (const k in attrs) el.setAttribute(k, attrs[k]);
  if (text !== undefined) el.textContent = text;
  parent.appendChild(el);
}
function fill(id, colors) {
  for (const c of colors.split(' ')) {
    const i = document.createElement('i');
    i.style.background = '#' + c;
    $(id).appendChild(i);
  }
}
fill('main-palette', '000 1a1a1a 333 4d4d4d 666 808080 999 b3b3b3 ccc e6e6e6 fff 00f 0ff 0f0 ff0 f00 f0f 90c f60 f9c 633 ccf 99f 69f 66f 66c 039 006 369 0cf 9ff 9cc 699 366 033 063 093 396 3c6 3c3 6fc 3c9 9c9 cfc 9f9 696 693 9c3 9c6 000 9f0 cf6 330 663 996 993 cc3 ff6 ff9 ffc 963 c63 c93 f63 f93 f96');
fill('doc-colors', '000 000 f60 fff fff ff0');
fill('spot-colors', 'faf5d8 f5e7a8 f7e07d f5dd6b fbd800 f5cc00 f3ecc0 efe3a8 e6d48a dfc050 cda820 c6a000 b89a00 efe3ac e8d68a dcc562 d0b340 b09000 9a7c08 8a7500 f3ecd0 dcd8a4 c9b26a a8923c 8a7420 7a6418 6c5418 5c4410 d9ae00');

const tools = ['pick', 'shape', 'crop', 'zoom', 'free', 'smart', 'rect', 'ellipse', 'poly', 'basic', 'text', 'table', 'dim', 'conn', 'glass', 'eyed', 'pen', 'fill', 'ifill'];
for (const t of tools) {
  const b = document.createElement('button');
  b.setAttribute('aria-label', t);
  if (t === 'pick') b.className = 'on';
  if (t === 'text' || t === 'table') b.className = 'plain';
  b.innerHTML = `<svg><use href="#t-${t}"/></svg>`;
  $('toolbox').appendChild(b);
}

/* Rulers: one inch is 51.07 units, split in eighths. */
const inch = 51.07;
const rh = $('ruler-h');
for (let e = -28; e <= 152; e++) {
  const x = Math.round(205 + e * inch / 8) + .5;
  const n = e / 8, whole = e % 8 === 0;
  draw(rh, 'path', { d: `M${x} ${whole ? 12 : e % 4 ? 18 : 17}V20`, stroke: '#444' });
  if (whole && n < 19) draw(rh, 'text', { x, y: 12 }, Math.abs(n));
}
draw(rh, 'text', { x: 1164, y: 12 }, 'inches');
draw(rh, 'path', { d: 'M8 6v9M4 10h9M12 13l5 5', stroke: '#444', 'stroke-dasharray': '2 1', fill: 'none' });
const rv = $('ruler-v');
for (let e = 1; e <= 83; e++) {
  const y = Math.round(530.6 - e * inch / 8) + .5;
  const whole = e % 8 === 0;
  draw(rv, 'path', { d: `M${whole ? 13 : e % 4 ? 17 : 16} ${y}H19`, stroke: '#444' });
  if (whole) draw(rv, 'text', { transform: `translate(13 ${y}) rotate(-90)` }, e / 8);
}
draw(rv, 'text', { transform: 'translate(13 513) rotate(-90)' }, 'inches');

/* Artwork */
['404040', '666', '808080', '999', 'b3b3b3', 'b3b3b3', 'b3b3b3', 'fff'].forEach((c, i) =>
  draw($('bars'), 'rect', { x: 342, y: Math.round(281 + i * 37.6), width: 103, height: 30, fill: '#' + c }));
for (const x of [322, 464, 605]) for (const y of [143, 371, 597])
  if (x !== 464 || y !== 371) draw($('handles'), 'rect', { x: x - 3, y: y - 3, width: 7, height: 7 });
for (const x of [329, 599]) for (const y of [151, 591])
  draw($('handles'), 'rect', { x: x - 1.5, y: y - 1.5, width: 3, height: 3, fill: '#fff', stroke: '#000' });

/* Curve grid, ten by ten */
for (let i = 0; i < 10; i++) {
  const p = Math.round(i * 24.5);
  const stroke = i ? '#a6a6a6' : '#666';
  draw($('grid'), 'path', { d: `M${700.5 + p} 188V433`, stroke });
  draw($('grid'), 'path', { d: `M700 ${188.5 + p}H944`, stroke });
}
```
